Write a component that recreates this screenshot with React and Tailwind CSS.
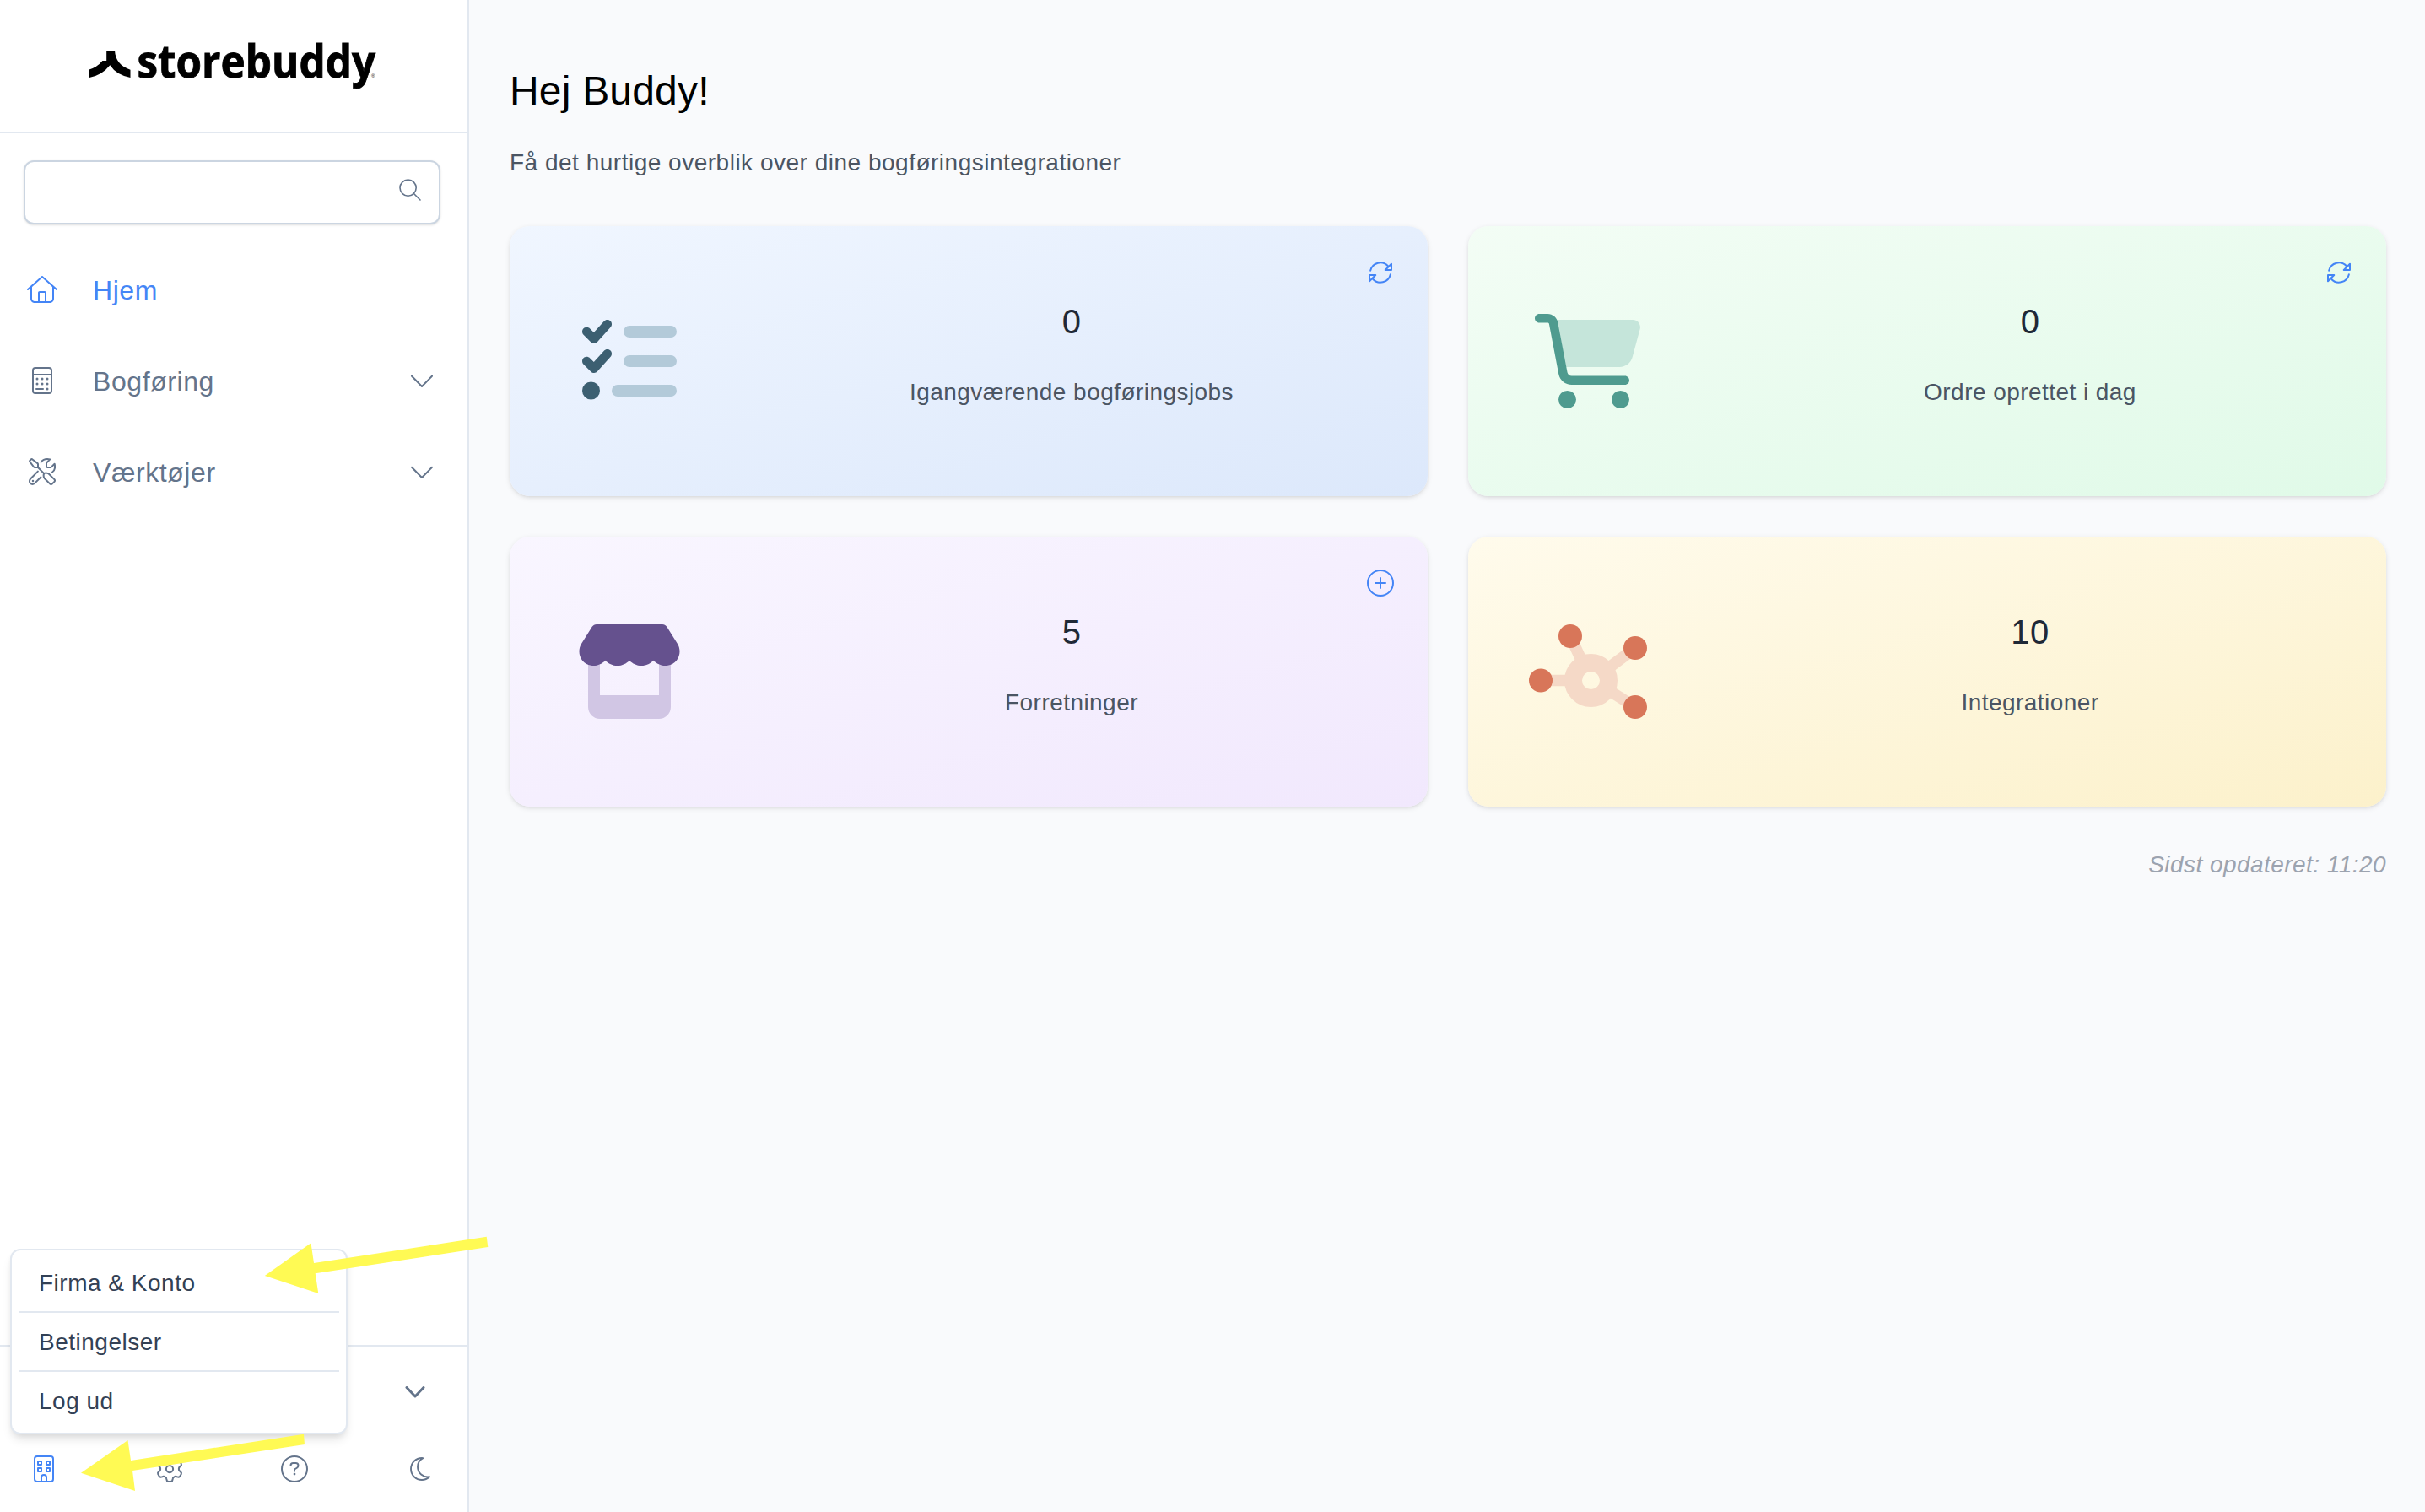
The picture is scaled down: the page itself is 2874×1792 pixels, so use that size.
import React from 'react'

function HomeIcon() {
  return (
    <svg viewBox="0 0 576 512" className="w-9 h-8" fill="currentColor">
      <path d="M298.6 4c-6-5.3-15.1-5.3-21.2 0L5.4 244c-6.6 5.8-7.3 16-1.4 22.6s16 7.3 22.6 1.4L64 235V432c0 44.2 35.8 80 80 80H432c44.2 0 80-35.8 80-80V235l37.4 33c6.6 5.8 16.7 5.2 22.6-1.4s5.2-16.7-1.4-22.6L298.6 4zM96 432V206.7L288 37.3 480 206.7V432c0 26.5-21.5 48-48 48H368V320c0-17.7-14.3-32-32-32H240c-17.7 0-32 14.3-32 32V480H144c-26.5 0-48-21.5-48-48zm144 48V320h96V480H240z" />
    </svg>
  )
}

function CalculatorIcon() {
  return (
    <svg viewBox="0 0 384 512" className="w-6 h-8" fill="none" stroke="currentColor" strokeWidth="32">
      <rect x="16" y="16" width="352" height="480" rx="48" />
      <path d="M16 144H368M80 416H208" strokeLinecap="round" />
      <g fill="currentColor" stroke="none">
        <circle cx="96" cy="224" r="24" />
        <circle cx="192" cy="224" r="24" />
        <circle cx="288" cy="224" r="24" />
        <circle cx="96" cy="320" r="24" />
        <circle cx="192" cy="320" r="24" />
        <circle cx="288" cy="320" r="24" />
        <circle cx="288" cy="416" r="24" />
      </g>
    </svg>
  )
}

function ToolsIcon() {
  return (
    <svg viewBox="0 0 512 512" className="size-8" fill="none" stroke="currentColor" strokeWidth="32" strokeLinecap="round" strokeLinejoin="round">
      <path d="M20 66Q14 54 24 44L44 24Q54 14 66 20L168 98Q176 104 176 114V176H114Q104 176 98 168Z" />
      <path d="M176 176L290 290" />
      <path d="M290 286Q346 268 384 300L490 406Q502 424 490 442L442 490Q424 502 406 490L300 384Q270 346 290 286Z" />
      <path d="M234 74C264 34 330 6 404 22L342 84Q336 90 336 98V152Q336 176 360 176H414Q422 176 428 170L490 108C508 180 488 240 440 272" />
      <path d="M174 250L34 392C-6 440 28 496 68 496Q94 496 112 478L230 360" />
      <circle cx="80" cy="432" r="20" fill="currentColor" stroke="none" />
    </svg>
  )
}

function Chevron() {
  return (
    <svg viewBox="0 0 32 32" className="size-8" fill="none" stroke="currentColor" strokeWidth="2" strokeLinecap="round" strokeLinejoin="round">
      <path d="M4 10.8L16 23L28 10.8" />
    </svg>
  )
}

function RefreshIcon() {
  return (
    <svg viewBox="0 0 512 512" className="size-8" fill="none" stroke="currentColor" strokeWidth="32" strokeLinecap="round" strokeLinejoin="round">
      <path d="M66 220A194 194 0 0 1 402 136M464 92V208H348Z" />
      <path d="M446 292A194 194 0 0 1 110 376M48 420V304H164Z" />
    </svg>
  )
}

function PlusIcon() {
  return (
    <svg viewBox="0 0 512 512" className="size-8" fill="none" stroke="currentColor" strokeWidth="32" strokeLinecap="round">
      <circle cx="256" cy="256" r="240" />
      <path d="M256 160V352M160 256H352" />
    </svg>
  )
}

function BuildingIcon() {
  return (
    <svg viewBox="0 0 384 512" className="w-6 h-8" fill="none" stroke="currentColor" strokeWidth="32" strokeLinejoin="round">
      <rect x="16" y="16" width="352" height="480" rx="48" />
      <rect x="80" y="112" width="64" height="64" />
      <rect x="240" y="112" width="64" height="64" />
      <rect x="80" y="240" width="64" height="64" />
      <rect x="240" y="240" width="64" height="64" />
      <path d="M144 496V416a48 48 0 0 1 96 0V496" />
    </svg>
  )
}

// outline of one tooth as [degrees, radius], repeated six times
const tooth = [[-9, 181], [0, 174], [9, 181], [13, 202], [18, 234], [24, 241], [36, 241], [42, 234], [47, 202]]
const gearPoints = [0, 60, 120, 180, 240, 300].flatMap((turn) =>
  tooth.map(([deg, r]) => {
    const a = ((deg + turn) * Math.PI) / 180
    return `${(256 + r * Math.cos(a)).toFixed(1)},${(256 + r * Math.sin(a)).toFixed(1)}`
  })
).join(' ')

function GearIcon() {
  return (
    <svg viewBox="0 0 512 512" className="size-8" fill="none" stroke="currentColor" strokeWidth="32" strokeLinejoin="round">
      <polygon points={gearPoints} />
      <circle cx="256" cy="256" r="66" />
    </svg>
  )
}

function HelpIcon() {
  return (
    <svg viewBox="0 0 512 512" className="size-8" fill="none" stroke="currentColor" strokeWidth="32" strokeLinecap="round">
      <circle cx="256" cy="256" r="240" />
      <path d="M184 190C184 160 204 144 230 144H280C308 144 328 164 328 192C328 210 318 226 302 236L256 264V298" />
      <circle cx="256" cy="352" r="22" fill="currentColor" stroke="none" />
    </svg>
  )
}

function MoonIcon() {
  return (
    <svg viewBox="0 0 384 512" className="w-6 h-8" fill="none" stroke="currentColor" strokeWidth="30" strokeLinejoin="round">
      <path d="M224 48C108 48 16 140 16 256S108 464 224 464C280 464 330 442 368 404C244 422 144 332 144 216C144 144 182 84 244 49Z" />
    </svg>
  )
}

function ListIcon() {
  const check = 'M152.1 38.2c9.9 8.9 10.7 24 1.8 33.9l-72 80c-4.4 4.9-10.6 7.8-17.2 7.9s-12.9-2.4-17.6-7L7 113C-2.3 103.6-2.3 88.4 7 79s24.6-9.4 33.9 0l22.1 22.1 55.1-61.2c8.9-9.9 24-10.7 33.9-1.8z'
  return (
    <svg viewBox="0 0 512 512" className="size-28" fill="#3c5f71">
      <g fill="#b3cad9">
        <rect x="224" y="64" width="288" height="64" rx="32" />
        <rect x="224" y="224" width="288" height="64" rx="32" />
        <rect x="160" y="384" width="352" height="64" rx="32" />
      </g>
      <path d={check} />
      <path d={check} transform="translate(0 160)" />
      <circle cx="48" cy="416" r="48" />
    </svg>
  )
}

function CartIcon() {
  return (
    <svg viewBox="0 0 576 512" className="w-[126px] h-28" fill="#4f9b8f">
      <path fill="#c5e5da" d="M120 32H531.1c26.3 0 45.5 25 38.6 50.4l-41 152.3c-8.5 31.4-37 53.3-69.5 53.3H168z" />
      <path d="M0 24C0 10.7 10.7 0 24 0H69.5c26.9 0 50 19.1 55 45.5l51.6 271c2.2 11.3 12.1 19.5 23.6 19.5H488c13.3 0 24 10.7 24 24s-10.7 24-24 24H199.7c-34.6 0-64.3-24.6-70.7-58.5L77.4 54.5c-.7-3.8-4-6.5-7.9-6.5H24C10.7 48 0 37.3 0 24z" />
      <circle cx="176" cy="464" r="48" />
      <circle cx="464" cy="464" r="48" />
    </svg>
  )
}

function StoreIcon() {
  return (
    <svg viewBox="0 0 576 512" className="w-[126px] h-28" fill="#65518e">
      <path fill="#d1c6e4" d="M64 200V448c0 35.3 28.7 64 64 64H448c35.3 0 64-28.7 64-64V200H448V384H128V200z" />
      <path d="M547.6 103.8L490.3 13.1C485.2 5 476.1 0 466.4 0H109.6C99.9 0 90.8 5 85.7 13.1L28.3 103.8c-29.6 46.8-3.4 111.9 51.9 119.4c4 .5 8.1 .8 12.1 .8c26.1 0 49.3-11.4 65.2-29c15.9 17.6 39.1 29 65.2 29c26.1 0 49.3-11.4 65.2-29c15.9 17.6 39.1 29 65.2 29c26.2 0 49.3-11.4 65.2-29c16 17.6 39.1 29 65.2 29c4.1 0 8.1-.3 12.1-.8c55.5-7.4 81.8-72.5 52.1-119.4z" />
    </svg>
  )
}

function NetworkIcon() {
  return (
    <svg viewBox="0 0 640 512" className="w-[140px] h-28" fill="#d87659">
      <g fill="none" stroke="#f5d9c7" strokeWidth="62">
        <path d="M224 64L290 206M576 128L426 240M64 304H210M576 448L430 356" />
        <circle cx="336" cy="304" r="96" strokeWidth="96" />
      </g>
      <circle cx="224" cy="64" r="64" />
      <circle cx="576" cy="128" r="64" />
      <circle cx="64" cy="304" r="64" />
      <circle cx="576" cy="448" r="64" />
    </svg>
  )
}

function Logo() {
  return (
    <svg viewBox="0 0 344 56" className="w-[344px] h-14 overflow-visible" fill="#000">
      <path d="M0 32.7Q10 30 16.4 22H21.2V10H31Q32 27 49.5 32.7V42Q33 39 25.3 27.3Q16 39.5 0 42.3Z" />
      <text x="57.5" y="42" fontFamily="'Open Sans', 'Noto Sans', sans-serif" fontWeight="700" fontSize="53.5" stroke="#000" strokeWidth="0.9" textLength="282.5" lengthAdjust="spacingAndGlyphs">storebuddy</text>
      <text x="335" y="42" fontFamily="'Liberation Sans', sans-serif" fontSize="6">®</text>
    </svg>
  )
}

function NavItem({ icon, label, active, more }) {
  return (
    <div className={`flex items-center h-[108px] pl-7 pr-[38px] ${active ? 'text-[#4485f6]' : 'text-[#64748b]'}`}>
      <div className="flex justify-center w-11">{icon}</div>
      <span className="ml-[38px] pt-0.5 flex-1 text-[32px] tracking-[0.018em]">{label}</span>
      {more && <Chevron />}
    </div>
  )
}

function Sidebar() {
  return (
    <aside className="relative flex flex-col w-[556px] shrink-0 bg-white border-r-2 border-slate-200">
      <div className="flex items-center justify-center h-[158px] border-b-2 border-slate-200">
        <Logo />
      </div>
      <div className="flex items-center justify-end h-[76px] mt-8 ml-7 mr-8 pr-[21px] pb-1.5 bg-white border-2 border-[#cbd5e1] rounded-xl shadow-sm">
        <svg viewBox="0 0 26 26" className="size-[26px] text-[#64748b]" fill="none" stroke="currentColor" strokeWidth="1.6" strokeLinecap="round">
          <circle cx="10.6" cy="10.6" r="9.6" />
          <path d="M17.5 17.5L25 25" />
        </svg>
      </div>
      <nav className="flex-1 mt-[23px]">
        <NavItem icon={<HomeIcon />} label="Hjem" active />
        <NavItem icon={<CalculatorIcon />} label="Bogføring" more />
        <NavItem icon={<ToolsIcon />} label="Værktøjer" more />
      </nav>
      <div className="h-[198px] border-t-2 border-slate-200 text-[#64748b]">
        <div className="flex justify-end h-[108px] pr-[50px] pt-[47px]">
          <svg viewBox="0 0 24 14" className="w-6 h-3.5" fill="none" stroke="currentColor" strokeWidth="3" strokeLinecap="round" strokeLinejoin="round">
            <path d="M2 1.5L12 12L22 1.5" />
          </svg>
        </div>
        <div className="flex items-center justify-between pl-9 pr-10 h-[74px]">
          <div className="flex justify-center w-8 text-[#4485f6]"><BuildingIcon /></div>
          <GearIcon />
          <HelpIcon />
          <div className="flex justify-center w-8"><MoonIcon /></div>
        </div>
      </div>
      <UserMenu />
    </aside>
  )
}

function UserMenu() {
  return (
    <div className="absolute left-3 bottom-[92px] w-[400px] px-2 py-1 bg-white border-2 border-slate-200 rounded-xl shadow-[0_8px_12px_-2px_rgba(0,0,0,0.1),0_4px_8px_-4px_rgba(0,0,0,0.1)] divide-y-2 divide-slate-200 text-[28px] tracking-[0.018em] text-[#334155]">
      <div className="flex items-center h-[70px] px-6 pt-0.5">Firma &amp; Konto</div>
      <div className="flex items-center h-[70px] px-6 pt-0.5">Betingelser</div>
      <div className="flex items-center h-[68px] px-6 pt-0.5">Log ud</div>
    </div>
  )
}

function Card({ icon, value, label, action, color }) {
  return (
    <div className={`relative flex items-center gap-6 h-80 px-8 rounded-3xl bg-linear-to-br shadow-[0_2px_6px_rgba(0,0,0,0.1),0_2px_4px_-2px_rgba(0,0,0,0.1)] ${color}`}>
      <div className="flex justify-center w-[220px]">{icon}</div>
      <div className="flex-1 pb-[18px] text-center tracking-[0.028em]">
        <p className="text-[40px] leading-14 text-[#1f2937]">{value}</p>
        <p className="mt-9 text-[28px] leading-10 text-[#4b5563]">{label}</p>
      </div>
      {action && <div className="absolute top-[39px] right-10 text-[#4485f6]">{action}</div>}
    </div>
  )
}

// yellow pointers on top of the page
function Arrows() {
  return (
    <svg viewBox="0 0 600 352" className="absolute left-0 bottom-0 w-[600px] h-[352px]" fill="#fffa54">
      <path d="M313.8 72L368.5 33.3L372 57L576.7 25.7L578.3 38L373.7 69.3L377.3 93Z" />
      <path d="M96 305.7L151.5 267L155 291L360 259.7L361 272L157 303L160 327Z" />
    </svg>
  )
}

export default function App() {
  return (
    <div className="relative flex w-[2874px] h-[1792px] overflow-hidden bg-[#f9fafc] font-['Liberation_Sans',Arial,sans-serif]">
      <Sidebar />
      <main className="flex-1 pl-12 pr-[46px] pt-[76px]">
        <h1 className="text-[48px] leading-[64px] tracking-[0.004em] text-black">Hej Buddy!</h1>
        <p className="mt-[33px] text-[28px] leading-10 tracking-[0.018em] text-[#4b5563]">Få det hurtige overblik over dine bogføringsintegrationer</p>
        <div className="grid grid-cols-2 gap-12 mt-[55px]">
          <Card icon={<ListIcon />} value="0" label="Igangværende bogføringsjobs" action={<RefreshIcon />} color="from-[#f0f6ff] to-[#dce8fb]" />
          <Card icon={<CartIcon />} value="0" label="Ordre oprettet i dag" action={<RefreshIcon />} color="from-[#f3fdf5] to-[#e0fae8]" />
          <Card icon={<StoreIcon />} value="5" label="Forretninger" action={<PlusIcon />} color="from-[#f9f6ff] to-[#f1e8fd]" />
          <Card icon={<NetworkIcon />} value="10" label="Integrationer" color="from-[#fffbec] to-[#fcf1cb]" />
        </div>
        <p className="mt-[49px] text-right text-[28px] leading-10 italic tracking-[0.016em] text-[#9ca3af]">Sidst opdateret: 11:20</p>
      </main>
      <Arrows />
    </div>
  )
}
